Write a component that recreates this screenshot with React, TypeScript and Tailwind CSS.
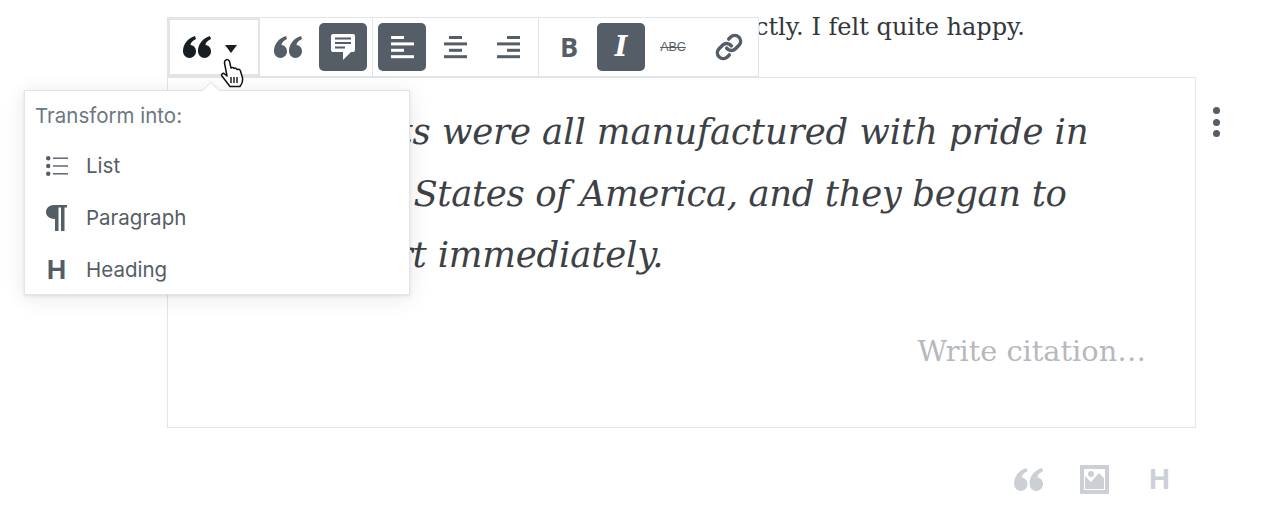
import { Link } from "lucide-react";

const serif = "font-['DejaVu_Serif',serif]";
const sans = "font-['Inter','Noto_Sans',sans-serif]";

function QuoteIcon({ className }: { className: string }) {
  return (
    <svg viewBox="0 0 28 22" className={className} fill="currentColor">
      <path d="M0 15C0 8 5 2 12 0L13 3C9 5 7.5 7 7.5 9C11 9.5 13 12 13 15.5C13 19 10 22 6.5 22C3 22 0 19 0 15Z" />
      <path d="M15 15C15 8 20 2 27 0L28 3C24 5 22.5 7 22.5 9C26 9.5 28 12 28 15.5C28 19 25 22 21.5 22C18 22 15 19 15 15Z" />
    </svg>
  );
}

function AlignIcon({ rows }: { rows: number[][] }) {
  return (
    <svg viewBox="0 0 24 24" className="h-6 w-6" fill="currentColor">
      {rows.map(([x, w], i) => (
        <rect key={i} x={x + 1} y={1 + i * 6.4} width={w} height="3" />
      ))}
    </svg>
  );
}

function ToolButton({ active, children }: { active?: boolean; children: React.ReactNode }) {
  return (
    <div
      className={`flex h-12 w-12 items-center justify-center rounded-[5px] ${
        active ? "bg-[#555d66] text-white" : "text-[#555d66]"
      }`}
    >
      {children}
    </div>
  );
}

function Toolbar() {
  return (
    <div className="absolute left-[167px] top-[17px] flex h-[60px] border border-[#e2e4e7] bg-white">
      <div className="relative flex w-[92px] items-center gap-[14px] border-2 border-[#e2e4e7] pl-[13px] text-[#191e23]">
        <QuoteIcon className="h-[22px] w-7" />
        <div className="mt-[3px] h-0 w-0 border-x-[6px] border-t-[8px] border-x-transparent border-t-[#191e23]" />
      </div>
      <div className="flex w-[113px] items-center gap-[7px] border-r border-[#e2e4e7] pl-[4px]">
        <ToolButton>
          <QuoteIcon className="h-[22px] w-7" />
        </ToolButton>
        <ToolButton active>
          <svg viewBox="0 0 28 28" className="h-7 w-7">
            <path d="M4 1H24A2 2 0 0 1 26 3V17A2 2 0 0 1 24 19H22L14 27V19H4A2 2 0 0 1 2 17V3A2 2 0 0 1 4 1Z" fill="white" />
            <path d="M6 5.5H22M6 10H22M6 14.5H16" stroke="#555d66" strokeWidth="1.8" />
          </svg>
        </ToolButton>
      </div>
      <div className="flex w-[166px] items-center gap-[5px] border-r border-[#e2e4e7] pl-[5px]">
        <ToolButton active>
          <AlignIcon rows={[[0, 13], [0, 23], [0, 13], [0, 23]]} />
        </ToolButton>
        <ToolButton>
          <AlignIcon rows={[[5, 13], [0, 23], [5, 13], [0, 23]]} />
        </ToolButton>
        <ToolButton>
          <AlignIcon rows={[[10, 13], [0, 23], [10, 13], [0, 23]]} />
        </ToolButton>
      </div>
      <div className="flex w-[219px] items-center pl-[6px]">
        <ToolButton>
          <span className="font-['Open_Sans',sans-serif] text-[27px] font-bold">B</span>
        </ToolButton>
        <div className="ml-[4px]">
          <ToolButton active>
            <span className="font-['DejaVu_Serif',serif] text-[27px] font-bold italic">I</span>
          </ToolButton>
        </div>
        <div className="ml-[4px]">
          <ToolButton>
            <span className="font-['Liberation_Sans',sans-serif] text-[12.5px] line-through">ABC</span>
          </ToolButton>
        </div>
        <div className="ml-[8px]">
          <ToolButton>
            <Link size={28} strokeWidth={3} />
          </ToolButton>
        </div>
      </div>
    </div>
  );
}

function Row({ icon, label }: { icon: React.ReactNode; label: string }) {
  return (
    <div className="flex h-[52px] items-center">
      <div className="flex w-[61px] justify-center pl-[2px] text-[#555d66]">{icon}</div>
      <span className="text-[20.5px] text-[#555d66]">{label}</span>
    </div>
  );
}

function TransformMenu() {
  return (
    <div className={`absolute left-6 top-[90px] h-[205px] w-[386px] border border-[#e2e4e7] bg-white shadow-[0_3px_20px_rgba(25,30,35,0.1),0_1px_3px_rgba(25,30,35,0.1)] ${sans}`}>
      <div className="absolute left-[180px] top-[-7px] h-3 w-3 rotate-45 border-l border-t border-[#e2e4e7] bg-white" />
      <p className="pb-[10px] pl-[10px] pt-[11px] text-[20.5px] leading-[28px] text-[#6c7781]">Transform into:</p>
      <Row
        label="List"
        icon={
          <svg viewBox="0 0 22 20" className="h-5 w-[22px]" fill="currentColor">
            <circle cx="2.2" cy="2.2" r="2.2" />
            <circle cx="2.2" cy="10" r="2.2" />
            <circle cx="2.2" cy="17.8" r="2.2" />
            <rect x="7" y="1.5" width="15" height="1.4" />
            <rect x="7" y="9.3" width="15" height="1.4" />
            <rect x="7" y="17.1" width="15" height="1.4" />
          </svg>
        }
      />
      <Row
        label="Paragraph"
        icon={
          <svg viewBox="0 0 22 26" className="h-[26px] w-[22px]" fill="currentColor">
            <path d="M8 0H21V2.5H18.5V26H15V2.5H12.5V26H9V14C3.5 14 0 11 0 7C0 3 3.5 0 8 0Z" />
          </svg>
        }
      />
      <Row label="Heading" icon={<span className="font-['Liberation_Sans',sans-serif] text-[27px] font-bold leading-none">H</span>} />
    </div>
  );
}

function HandCursor() {
  return (
    <svg viewBox="0 0 24 30" className="absolute left-[220px] top-[58px] h-[30px] w-6">
      <path
        d="M6 2C7.5 1 9 2 9.5 3.5L11 10C12 9 13.5 9.5 14 10.5C15 9.8 16.5 10 17 11.5C18.5 11 20 11.5 20.5 13L22.5 20C23 23 22 26 20 28.5H10C8 26 5 22 2 18C1 16.5 2.5 15 4 15.5L7 18L4.5 5C4.3 3.5 5 2.5 6 2Z"
        fill="white"
        stroke="#111"
        strokeWidth="1.5"
        strokeLinejoin="round"
      />
      <path d="M11 19V25M14 19V25M17 19V25" stroke="#111" strokeWidth="1.4" />
    </svg>
  );
}

export default function App() {
  return (
    <div className={`relative h-[512px] w-[1280px] overflow-hidden bg-white ${serif}`}>
      <div className="flex h-[77px] w-[1025px] justify-end overflow-hidden">
        <p className="shrink-0 whitespace-nowrap pt-[9px] text-[24px] leading-[36px] text-[#32373c]">
          The box held all my shirts, and they fit me perfectly. I felt quite happy.
        </p>
      </div>

      <div className="flex">
        <div className="ml-[167px] h-[351px] w-[1029px] border border-[#e2e4e7] pl-[40px] pr-[49px] pt-[23px]">
          <div className="whitespace-nowrap text-[35.5px] italic leading-[61.5px] text-[#3d4146]">
            <p className="ml-[43px] tracking-[-0.1px]">The shirts were all manufactured with pride in</p>
            <p className="ml-[7px] tracking-[-0.4px]">the United States of America, and they began to</p>
            <p className="ml-[56px] tracking-[-0.2px]">fall apart immediately.</p>
          </div>
          <p className="mt-[45px] text-right text-[28.8px] leading-10 text-[#b5b9bd]">Write citation…</p>
        </div>
        <div className="ml-[17px] mt-[30px] flex h-[30px] flex-col justify-between">
          <div className="h-[7px] w-[7px] rounded-full bg-[#555d66]" />
          <div className="h-[7px] w-[7px] rounded-full bg-[#555d66]" />
          <div className="h-[7px] w-[7px] rounded-full bg-[#555d66]" />
        </div>
      </div>

      <div className="ml-[1014px] mt-[37px] flex items-center text-[#ccd0d4]">
        <QuoteIcon className="h-[23px] w-[29px]" />
        <svg viewBox="0 0 29 29" className="ml-[37px] h-[29px] w-[29px]" fill="currentColor">
          <path fillRule="evenodd" d="M1 0H28A1 1 0 0 1 29 1V28A1 1 0 0 1 28 29H1A1 1 0 0 1 0 28V1A1 1 0 0 1 1 0ZM4 4V25H25V4Z" />
          <circle cx="11" cy="9" r="3" />
          <path d="M5 11L11 17L19 8L24 13V24H5Z" />
        </svg>
        <span className="ml-[40px] font-['Liberation_Sans',sans-serif] text-[29px] font-bold leading-none">H</span>
      </div>

      <Toolbar />
      <TransformMenu />
      <HandCursor />
    </div>
  );
}
